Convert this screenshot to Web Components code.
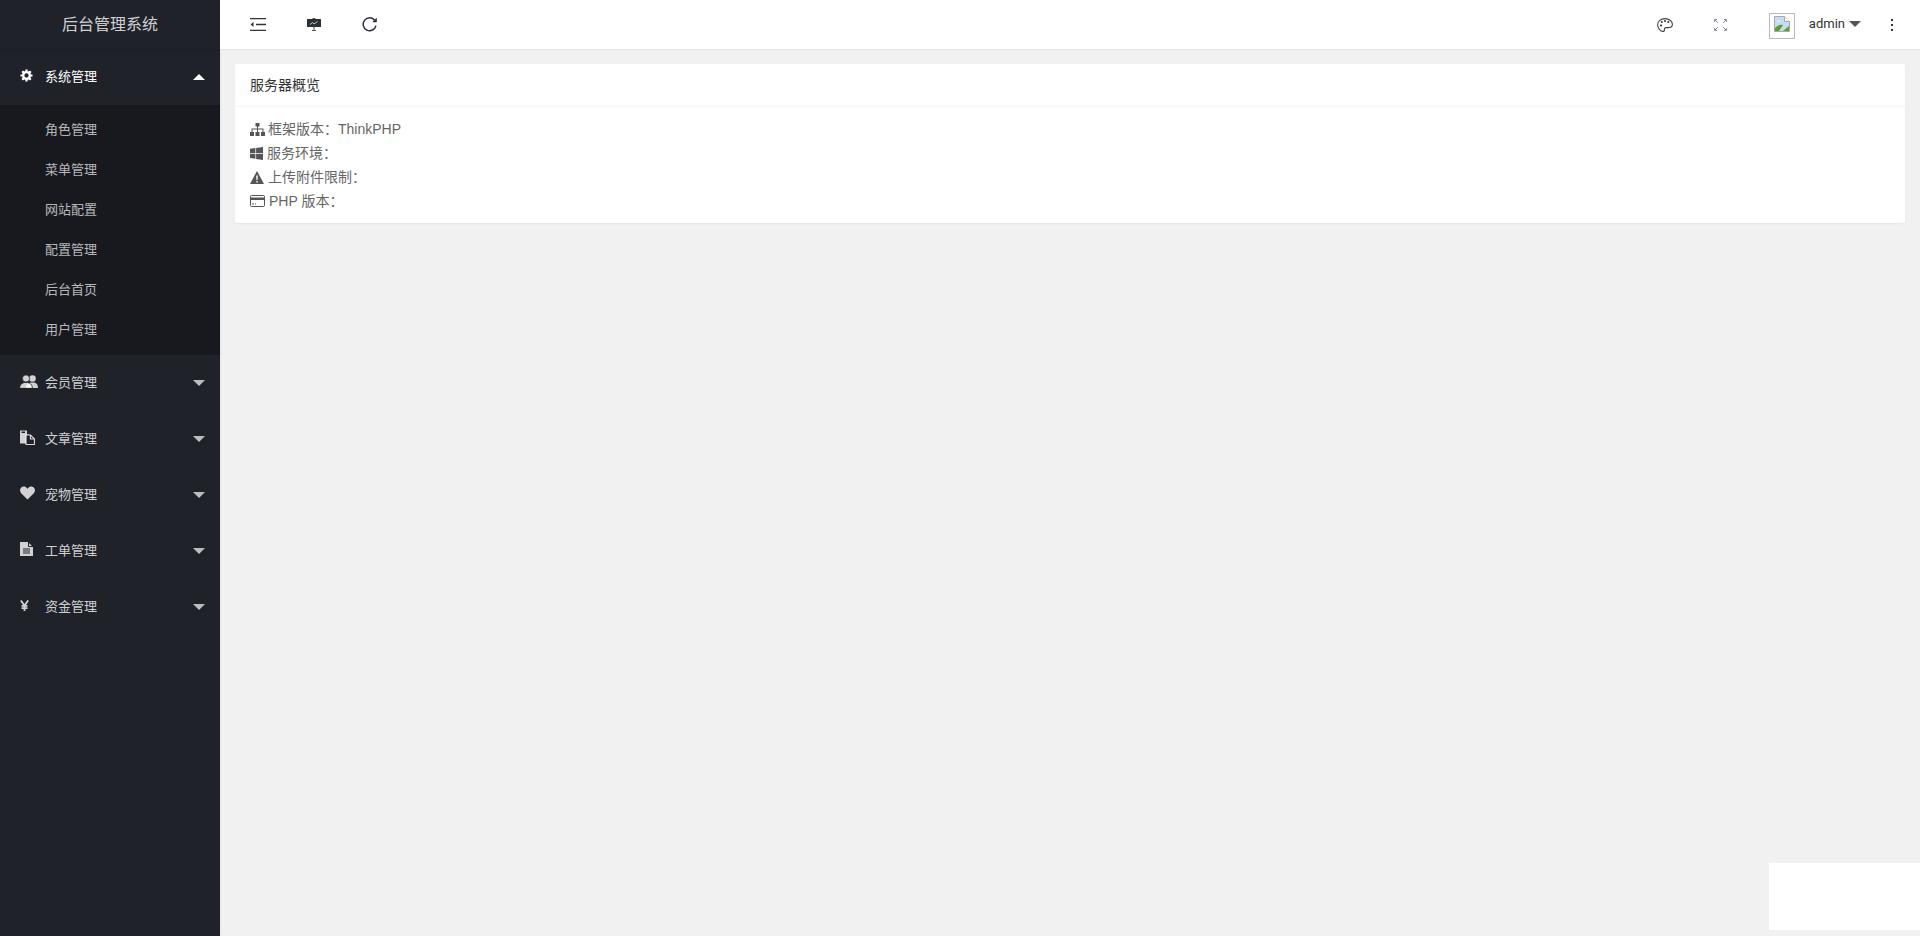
<!DOCTYPE html>
<html lang="zh">
<head>
<meta charset="utf-8">
<title>后台管理系统</title>
<style>
  html, body { margin: 0; height: 100%; }
  body { font: 14px "Liberation Sans", "Noto Sans CJK SC", sans-serif; background: #f1f1f1; color: #666; overflow: hidden; }
</style>
</head>
<body>
<admin-app>
  <side-nav slot="side" title-text="后台管理系统">
    <nav-group icon="cog" label="系统管理" open>
      <nav-link>角色管理</nav-link>
      <nav-link>菜单管理</nav-link>
      <nav-link>网站配置</nav-link>
      <nav-link>配置管理</nav-link>
      <nav-link>后台首页</nav-link>
      <nav-link>用户管理</nav-link>
    </nav-group>
    <nav-group icon="users" label="会员管理"></nav-group>
    <nav-group icon="files" label="文章管理"></nav-group>
    <nav-group icon="heart" label="宠物管理"></nav-group>
    <nav-group icon="doc" label="工单管理"></nav-group>
    <nav-group icon="yen" label="资金管理"></nav-group>
  </side-nav>
  <top-bar slot="top"></top-bar>
  <info-card slot="main" heading="服务器概览">
    <info-line icon="sitemap">框架版本：ThinkPHP</info-line>
    <info-line icon="windows">服务环境：</info-line>
    <info-line icon="warning">上传附件限制：</info-line>
    <info-line icon="card">PHP 版本：</info-line>
  </info-card>
</admin-app>

<script>
const ICONS = {
  cog: `<svg width="13" height="13" viewBox="0 0 14 14"><circle cx="7" cy="7" r="3.6" fill="none" stroke="currentColor" stroke-width="2.6"/><g stroke="currentColor" stroke-width="2.4"><path d="M7 .5v2.6M7 10.9v2.6M.5 7h2.6M10.900 7h2.600M2.400 2.400l1.800 1.800M9.800 9.800l1.800 1.800M2.400 11.600l1.800-1.800M9.800 4.200l1.800-1.800"/></g></svg>`,
  users: `<svg width="18" height="13" viewBox="0 0 18 13" fill="currentColor"><circle cx="12.500" cy="3.500" r="3.300"/><path d="M6 13c0-3.500 2.500-5.500 6.500-5.500s5.500 2 5.500 5.500z"/><g stroke="#20222a" stroke-width=".8"><circle cx="6" cy="3.500" r="3.600"/><path d="M-.4 13.400c0-3.800 2.600-6 6.400-6s6.400 2.200 6.400 6z"/></g></svg>`,
  files: `<svg width="15" height="15" viewBox="0 0 15 15"><path d="M0 .5h7l0 4H9v9H0z" fill="currentColor"/><path d="M1.500 1.500h3.500v1.500H1.500z" fill="#20222a"/><path d="M6 5h4.500L14.500 9v5.500H6z" fill="#20222a" stroke="currentColor" stroke-width="1.200"/><path d="M10.500 5v4h4" fill="none" stroke="currentColor" stroke-width="1.200"/></svg>`,
  heart: `<svg width="15" height="14" viewBox="0 0 15 14" fill="currentColor"><path d="M7.500 13.500 1.200 7.200C-.4 5.500-.3 2.900 1.200 1.500 2.900 0 5.300.3 6.600 1.700l.9 1 .9-1C9.700.3 12.100 0 13.800 1.500c1.500 1.400 1.600 4 0 5.700z"/></svg>`,
  doc: `<svg width="13" height="14" viewBox="0 0 13 14"><path d="M0 0h8l5 5v9H0z" fill="currentColor"/><path d="M8.500 0v4.500H13" fill="none" stroke="#20222a" stroke-width="1"/><path d="M3 7h7M3 9h7M3 11h7" stroke="#20222a" stroke-width="1"/></svg>`,
  yen: `<svg width="9" height="11" viewBox="0 0 9 11" fill="none" stroke="currentColor" stroke-width="1.800"><path d="M.8.500 4.500 5.500 8.200.500M4.500 5v6M1.500 5.800h6M1.500 8.200h6"/></svg>`,
  sitemap: `<svg width="15" height="13" viewBox="0 0 15 13" fill="currentColor" style="margin-right:-1px"><path d="M5.500 0h4v3.500h-4zM0 9h4v4H0zM5.500 9h4v4h-4zM11 9h4v4h-4z"/><path d="M7 3h1v2.500h5.500V9h-1V6.500H8V9H7V6.500H2.500V9h-1V5.500H7z"/></svg>`,
  windows: `<svg width="13" height="13" viewBox="0 0 13 13" fill="currentColor"><path d="M0 1.800 5.400 1v5H0zM6.100.9 13 0v6H6.100zM0 6.800h5.400v5L0 11.100zM6.100 6.800H13V13l-6.900-.9z"/></svg>`,
  warning: `<svg width="14" height="13" viewBox="0 0 14 13"><path d="M7 0 14 13H0z" fill="currentColor"/><path d="M6.200 4.500h1.600l-.2 4.500H6.400zM6.300 10h1.400v1.500H6.300z" fill="#fff"/></svg>`,
  card: `<svg width="15" height="12" viewBox="0 0 15 12"><rect x=".5" y=".5" width="14" height="11" rx="1" fill="none" stroke="currentColor"/><path d="M.5 2.500h14V5H.5z" fill="currentColor"/><path d="M2 9h2M5 9h1" stroke="currentColor"/></svg>`,
  indent: `<svg width="16" height="13" viewBox="0 0 16 13" stroke="#333" stroke-width="1.300"><path d="M0 .7h16M6 6.500h10M0 12.300h16"/><path d="M3.500 4v5L.5 6.500z" fill="#333" stroke="none"/></svg>`,
  screen: `<svg width="14" height="13" viewBox="0 0 14 13"><path d="M5.500 0h3v1h-3z" fill="#555"/><rect y="1" width="14" height="8" rx=".5" fill="#2b2f36"/><path d="M3 6.500 5.500 4.500 7 6l3.500-2.500" fill="none" stroke="#eee" stroke-width=".8"/><path d="M7 9v3M5 12.500h4" stroke="#555"/></svg>`,
  refresh: `<svg width="15" height="15" viewBox="0 0 14 14" fill="none"><path d="M12 3.300A6 6 0 1 0 13 8" stroke="#2a2f3a" stroke-width="1.400"/><path d="M13.800.8v4.200H9.500z" fill="#2a2f3a"/></svg>`,
  palette: `<svg width="16" height="14" viewBox="0 0 16 14"><path d="M8 .6C3.800.6.600 3.300.600 6.800c0 3.300 2.800 6.600 5.400 6.600 1 0 1.500-.6 1.400-1.400-.1-1 .1-2.400 1.700-2.400h2.600c2 0 3.700-1 3.700-3C15.400 3 12 .6 8 .6z" fill="none" stroke="#444" stroke-width="1.100"/><g fill="#333"><circle cx="4" cy="7.500" r="1.100"/><circle cx="4.800" cy="4" r="1"/><circle cx="8" cy="2.900" r="1"/><circle cx="11.300" cy="4" r="1"/></g></svg>`,
  expand: `<svg width="13" height="12" viewBox="0 0 13 12" fill="none" stroke="#8a8f99" stroke-width="1"><path d="M.5 3V.5H3M1 1l3 3M12.500 3V.5H10M12 1 9 4M.5 9v2.500H3M1 11l3-3M12.500 9v2.500H10M12 11 9 8"/></svg>`,
  broken: `<svg width="16" height="16" viewBox="0 0 16 16"><path d="M.5.5h10l5 5v10H.5z" fill="#c6dcf5" stroke="#a9a9a9"/><path d="M10.500.5v5h5" fill="#fff" stroke="#a9a9a9"/><path d="M1 15V12c3-3 5-3.500 8-3l-4 6z" fill="#5aa02c"/><path d="M9 15l6-5v5z" fill="#5aa02c"/><path d="M3 5.500c1-1.200 2.500-1.200 3.500 0z" fill="#fff"/></svg>`
};

class AdminApp extends HTMLElement {
  constructor() {
    super();
    this.attachShadow({ mode: 'open' }).innerHTML = `
      <style>
        :host { display: grid; grid-template-columns: 220px 1fr; grid-template-rows: 50px 1fr; height: 936px; }
        .side { grid-row: 1 / 3; }
        main { padding: 14px 15px 0; min-width: 0; }
        .corner { position: fixed; right: 0; top: 863px; width: 151px; height: 67px; background: #fff; }
      </style>
      <div class="side"><slot name="side"></slot></div>
      <div><slot name="top"></slot></div>
      <main><slot name="main"></slot></main>
      <div class="corner"></div>`;
  }
}

class SideNav extends HTMLElement {
  constructor() {
    super();
    this.attachShadow({ mode: 'open' }).innerHTML = `
      <style>
        :host { display: block; height: 100%; background: #20222a; box-shadow: 1px 0 2px rgba(0,0,0,.05); }
        .logo { height: 49px; line-height: 49px; text-align: center; font-size: 16px; color: rgba(255,255,255,.8); box-shadow: 0 1px 2px rgba(0,0,0,.1); }
      </style>
      <div class="logo">${this.getAttribute('title-text')}</div>
      <slot></slot>`;
  }
}

class NavGroup extends HTMLElement {
  constructor() {
    super();
    const open = this.hasAttribute('open');
    this.attachShadow({ mode: 'open' }).innerHTML = `
      <style>
        :host { display: block; font-size: 13px; color: rgba(255,255,255,.8); }
        :host([open]) { color: #fff; }
        .head { display: flex; align-items: center; box-sizing: border-box; height: 56px; padding: 0 15px 4px 20px; }
        .ico { width: 25px; flex: none; display: flex; }
        .label { flex: 1; }
        .caret { width: 0; height: 0; border: 6px solid transparent; }
        .down { border-top-color: rgba(255,255,255,.7); border-bottom-width: 0; margin-top: 4px; }
        .up { border-bottom-color: #fff; border-top-width: 0; margin-top: 3px; }
        .kids { background: #18191f; padding: 5px 0; }
      </style>
      <div class="head">
        <span class="ico">${ICONS[this.getAttribute('icon')]}</span>
        <span class="label">${this.getAttribute('label')}</span>
        <span class="caret ${open ? 'up' : 'down'}"></span>
      </div>
      ${open ? '<div class="kids"><slot></slot></div>' : ''}`;
  }
}

class NavLink extends HTMLElement {
  constructor() {
    super();
    this.attachShadow({ mode: 'open' }).innerHTML = `
      <style>
        :host { display: block; height: 40px; line-height: 40px; padding-left: 45px; color: rgba(255,255,255,.7); }
      </style>
      <slot></slot>`;
  }
}

class TopBar extends HTMLElement {
  constructor() {
    super();
    this.attachShadow({ mode: 'open' }).innerHTML = `
      <style>
        :host { display: flex; align-items: center; box-sizing: border-box; height: 50px; background: #fff; border-bottom: 1px solid #e6e6e6; padding: 0 27px 0 30px; color: #333; }
        .group { display: flex; align-items: center; }
        .left { gap: 41px; flex: 1; }
        .tool { display: flex; }
        .avatar { box-sizing: border-box; width: 26px; height: 26px; border: 1px solid #bbb; margin: 2px 0 0 42px; padding: 2px 1px; display: flex; align-items: flex-start; justify-content: center; }
        .name { margin-left: 14px; font: 13px Roboto, "Liberation Sans", sans-serif; color: #333; position: relative; top: -1px; }
        .caret { width: 0; height: 0; border: 6px solid transparent; border-top-color: #555; border-bottom-width: 0; margin: 0 0 1px 4px; }
        .more { display: flex; flex-direction: column; gap: 3px; margin-left: 30px; }
        .more i { display: block; width: 2px; height: 2px; background: #333; }
      </style>
      <div class="group left">
        <span class="tool">${ICONS.indent}</span>
        <span class="tool">${ICONS.screen}</span>
        <span class="tool">${ICONS.refresh}</span>
      </div>
      <div class="group">
        <span class="tool">${ICONS.palette}</span>
        <span class="tool" style="margin-left:41px">${ICONS.expand}</span>
        <span class="avatar">${ICONS.broken}</span>
        <span class="name">admin</span>
        <span class="caret"></span>
        <span class="more"><i></i><i></i><i></i></span>
      </div>`;
  }
}

class InfoCard extends HTMLElement {
  constructor() {
    super();
    this.attachShadow({ mode: 'open' }).innerHTML = `
      <style>
        :host { display: block; background: #fff; border-radius: 2px; box-shadow: 0 1px 2px rgba(0,0,0,.05); }
        .head { height: 42px; line-height: 42px; padding: 0 15px; border-bottom: 1px solid #f6f6f6; color: #333; }
        .body { padding: 10px 15px; }
      </style>
      <div class="head">${this.getAttribute('heading')}</div>
      <div class="body"><slot></slot></div>`;
  }
}

class InfoLine extends HTMLElement {
  constructor() {
    super();
    this.attachShadow({ mode: 'open' }).innerHTML = `
      <style>
        :host { display: flex; align-items: center; gap: 4px; height: 24px; line-height: 24px; color: #666; }
        span { display: flex; color: #555; }
      </style>
      <span>${ICONS[this.getAttribute('icon')]}</span><slot></slot>`;
  }
}

customElements.define('admin-app', AdminApp);
customElements.define('side-nav', SideNav);
customElements.define('nav-group', NavGroup);
customElements.define('nav-link', NavLink);
customElements.define('top-bar', TopBar);
customElements.define('info-card', InfoCard);
customElements.define('info-line', InfoLine);
</script>
</body>
</html>
